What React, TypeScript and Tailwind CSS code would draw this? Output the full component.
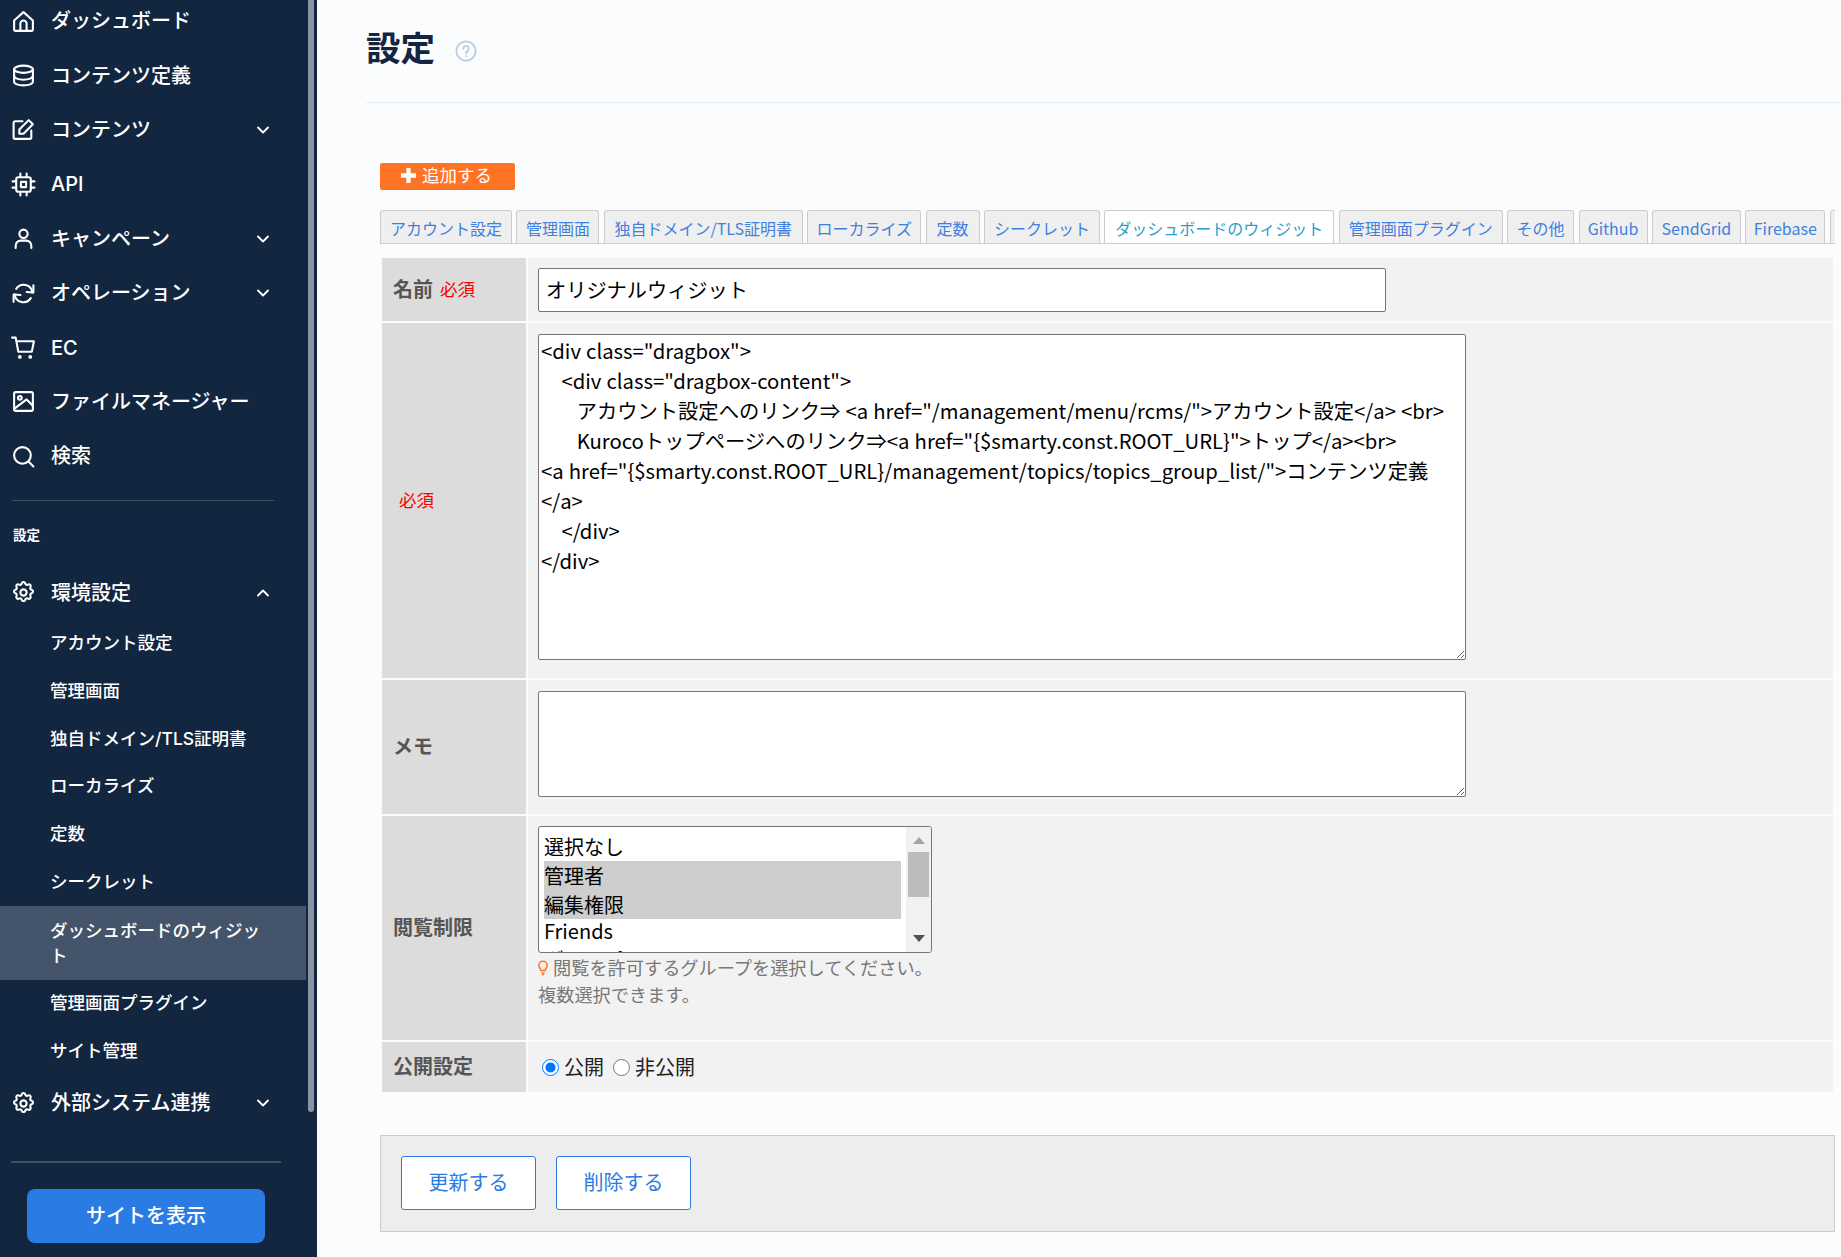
import { ChevronDown, ChevronUp } from 'lucide-react';

const tabs = [
  { label: 'アカウント設定', w: 'w-[132px]' },
  { label: '管理画面', w: 'w-[83px]' },
  { label: '独自ドメイン/TLS証明書', w: 'w-[199px]' },
  { label: 'ローカライズ', w: 'w-[114px]' },
  { label: '定数', w: 'w-[54px]' },
  { label: 'シークレット', w: 'w-[116px]' },
  { label: 'ダッシュボードのウィジット', w: 'w-[230px]' },
  { label: '管理画面プラグイン', w: 'w-[164px]' },
  { label: 'その他', w: 'w-[67px]' },
  { label: 'Github', w: 'w-[69px]' },
  { label: 'SendGrid', w: 'w-[89px]' },
  { label: 'Firebase', w: 'w-[80px]' },
  { label: 'Webhook', w: 'w-[90px]' },
];

const subItems = ['アカウント設定', '管理画面', '独自ドメイン/TLS証明書', 'ローカライズ', '定数', 'シークレット'];

const code = `<div class="dragbox">
    <div class="dragbox-content">
       アカウント設定へのリンク⇒ <a href="/management/menu/rcms/">アカウント設定</a> <br>
       Kurocoトップページへのリンク⇒<a href="{$smarty.const.ROOT_URL}">トップ</a><br>
<a href="{$smarty.const.ROOT_URL}/management/topics/topics_group_list/">コンテンツ定義</a>
    </div>
</div>`;

function Icon({ children }: { children: React.ReactNode }) {
  return (
    <svg viewBox="0 0 24 24" className="h-[25px] w-[25px] shrink-0" fill="none" stroke="currentColor" strokeWidth="2" strokeLinecap="round" strokeLinejoin="round">
      {children}
    </svg>
  );
}

const icons = {
  home: <><path d="M3 11l9-8 9 8v9a1 1 0 0 1-1 1H4a1 1 0 0 1-1-1z" /><path d="M9 21v-7a3 3 0 0 1 6 0v7" /></>,
  db: <><ellipse cx="12" cy="6" rx="9" ry="3.5" /><path d="M3 6v12c0 2 4 3.5 9 3.5s9-1.5 9-3.5V6" /><path d="M3 12.5c0 2 4 3.5 9 3.5s9-1.5 9-3.5" /></>,
  edit: <><path d="M11 4H4a1.5 1.5 0 0 0-1.5 1.5v14A1.5 1.5 0 0 0 4 21h14a1.5 1.5 0 0 0 1.500-1.500V13" /><path d="M17 3l4 4-9 9H8v-4z" /></>,
  cpu: <><rect x="5" y="5" width="14" height="14" rx="2" /><rect x="9.500" y="9.500" width="5" height="5" /><path d="M9 1.500V5M15 1.500V5M9 19v3.500M15 19v3.500M1.500 9H5M1.500 15H5M19 9h3.500M19 15h3.500" /></>,
  user: <><circle cx="12" cy="7.500" r="4" /><path d="M4.500 21v-2a5 5 0 0 1 5-5h5a5 5 0 0 1 5 5v2" /></>,
  refresh: <><path d="M20.500 11A8.500 8.500 0 0 0 5 7.500" /><path d="M21.500 4v7h-.500l-6-.500" /><path d="M3.500 13A8.500 8.500 0 0 0 19 16.500" /><path d="M2.500 20v-7h.500l6 .500" /></>,
  cart: <><path d="M1 2.500h3.500L7 16h13l2-10H5" /><circle cx="8.500" cy="21" r=".8" /><circle cx="18.500" cy="21" r=".8" /></>,
  image: <><rect x="3" y="3" width="18" height="18" rx="1.500" /><circle cx="8.500" cy="8.500" r="1.800" /><path d="M3 19l12-9 6 6" /></>,
  search: <><circle cx="11" cy="11" r="8" /><path d="M17 17l4.500 4.500" /></>,
  gear: <><circle cx="12" cy="12" r="3" /><path d="M10.300 3.300a1.750 1.750 0 0 1 3.400 0 1.750 1.750 0 0 0 2.600 1.100 1.750 1.750 0 0 1 2.400 2.400 1.750 1.750 0 0 0 1.100 2.600 1.750 1.750 0 0 1 0 3.400 1.750 1.750 0 0 0-1.100 2.600 1.750 1.750 0 0 1-2.400 2.400 1.750 1.750 0 0 0-2.600 1.100 1.750 1.750 0 0 1-3.400 0 1.750 1.750 0 0 0-2.600-1.100 1.750 1.750 0 0 1-2.400-2.400 1.750 1.750 0 0 0-1.100-2.600 1.750 1.750 0 0 1 0-3.400 1.750 1.750 0 0 0 1.100-2.600 1.750 1.750 0 0 1 2.400-2.400 1.750 1.750 0 0 0 2.600-1.100z" /></>,
};

function NavRow({ icon, label, open, className = 'h-[54.4px]' }: { icon: React.ReactNode; label: string; open?: 'up' | 'down'; className?: string }) {
  return (
    <div className={`flex items-center pl-[11px] pr-[44px] text-[20px] font-medium text-white ${className}`}>
      <Icon>{icon}</Icon>
      <span className="ml-[15px] flex-1 whitespace-nowrap">{label}</span>
      {open === 'down' && <ChevronDown size={20} strokeWidth={2.2} />}
      {open === 'up' && <ChevronUp size={20} strokeWidth={2.2} />}
    </div>
  );
}

function SubRow({ label }: { label: string }) {
  return <div className="flex h-[47.7px] items-center pl-[50px] text-[17.5px] font-medium text-white">{label}</div>;
}

function Sidebar() {
  return (
    <aside className="relative flex h-full w-[317px] shrink-0 flex-col overflow-hidden bg-[#13263f] font-['Inter','Noto_Sans_CJK_JP',sans-serif]">
      <div className="h-[1161px] shrink-0 overflow-hidden">
        <div className="-mt-[6px]">
          <NavRow icon={icons.home} label="ダッシュボード" />
          <NavRow icon={icons.db} label="コンテンツ定義" />
          <NavRow icon={icons.edit} label="コンテンツ" open="down" />
          <NavRow icon={icons.cpu} label="API" />
          <NavRow icon={icons.user} label="キャンペーン" open="down" />
          <NavRow icon={icons.refresh} label="オペレーション" open="down" />
          <NavRow icon={icons.cart} label="EC" />
          <NavRow icon={icons.image} label="ファイルマネージャー" />
          <NavRow icon={icons.search} label="検索" />
        </div>
        <div className="ml-[12px] mt-[16px] w-[262px] border-t border-[#3f4f66]" />
        <div className="ml-[13px] mt-[26px] text-[13.500px] font-bold leading-[16px] text-white">設定</div>
        <NavRow icon={icons.gear} label="環境設定" open="up" className="mt-[23px] h-[54px]" />
        {subItems.map((s) => <SubRow key={s} label={s} />)}
        <div className="mr-[11px] flex h-[74px] items-center bg-[#44546a] pl-[50px] pr-[40px] text-[17.5px] font-medium leading-[25px] text-white">
          ダッシュボードのウィジット
        </div>
        <SubRow label="管理画面プラグイン" />
        <SubRow label="サイト管理" />
        <NavRow icon={icons.gear} label="外部システム連携" open="down" className="mt-[1px] h-[54.4px]" />
      </div>
      <div className="mx-[11px] w-[270px] border-t-2 border-[#3f4f66] pl-[16px] pt-[26px]">
        <div className="flex h-[54px] w-[238px] items-center justify-center rounded-[8px] bg-[#2b7be4] text-[20px] font-medium text-white">
          サイトを表示
        </div>
      </div>
      <div className="absolute right-[3px] top-0 h-[1112px] w-[6px] rounded-b-[3px] bg-[#8a93a3]" />
    </aside>
  );
}

function Row({ label, h, children }: { label: React.ReactNode; h: string; children: React.ReactNode }) {
  return (
    <div className={`grid grid-cols-[144px_1fr] gap-[2px] ${h}`}>
      <div className="flex items-center bg-[#dcdcdc] pb-[1px] pl-[11px] text-[20px] font-bold text-[#555]">{label}</div>
      <div className="bg-[#f2f2f2] pl-[10px] pt-[10px]">{children}</div>
    </div>
  );
}

function RoleList() {
  const roles = ['選択なし', '管理者', '編集権限', 'Friends', 'グループ'];
  return (
    <div className="flex h-[127px] w-[394px] overflow-hidden rounded-[3px] border border-[#767676] bg-white text-[20px] text-black">
      <div className="w-[367px] shrink-0 pl-[5px] pt-[5px]">
        {roles.map((r, i) => (
          <div key={r} className={`w-[357px] ${i === 3 ? 'h-[26px] leading-[24px]' : 'h-[29px] leading-[29px]'} ${i === 1 || i === 2 ? 'bg-[#cecece]' : ''}`}>{r}</div>
        ))}
      </div>
      <div className="flex w-[25px] shrink-0 flex-col items-center bg-[#f1f1f1] pb-[10px] pt-[10px]">
        <svg viewBox="0 0 12 7" className="h-[7px] w-[12px] fill-[#a3a3a3]"><path d="M6 0l6 7H0z" /></svg>
        <div className="mt-[8px] h-[45px] w-[21px] bg-[#bcbcbc]" />
        <svg viewBox="0 0 12 7" className="mt-auto h-[7px] w-[12px] fill-[#505050]"><path d="M6 7L0 0h12z" /></svg>
      </div>
    </div>
  );
}

function Tabs() {
  return (
    <div className="mt-[20px] flex h-[34px] gap-[4.400px] overflow-hidden whitespace-nowrap border-b border-[#ccc]">
      {tabs.map((t, i) =>
        i === 6 ? (
          <div key={t.label} className={`relative h-[34px] shrink-0 rounded-t-[3px] border border-b-0 border-[#ccc] bg-white text-center text-[16px] leading-[35px] text-[#2a9dd0] ${t.w}`}>{t.label}</div>
        ) : (
          <div key={t.label} className={`h-[33px] shrink-0 rounded-t-[3px] border border-b-0 border-[#ccc] bg-[#efefef] text-center text-[16px] leading-[35px] text-[#3f7fe0] ${t.w}`}>{t.label}</div>
        ),
      )}
    </div>
  );
}

export default function App() {
  return (
    <div className="flex h-[1257px] w-full overflow-hidden bg-[#fbfcfe] font-['Noto_Sans_CJK_JP',sans-serif]">
      <Sidebar />
      <main className="min-w-0 flex-1 pl-[49px]">
        <div className="flex h-[103px] items-center border-b border-[#e8edf3] pb-[10px]">
          <h1 className="text-[34.500px] font-bold leading-none text-[#14263f]">設定</h1>
          <svg viewBox="0 0 24 24" className="ml-[20px] mt-[10px] h-[22px] w-[22px]" fill="none" stroke="#b9cbe3" strokeWidth="2" strokeLinecap="round">
            <circle cx="12" cy="12" r="10.500" />
            <path d="M9 9.500a3 3 0 1 1 4.500 2.600c-1 .6-1.500 1.200-1.500 2.400" />
            <path d="M12 17.500v.1" />
          </svg>
        </div>
        <div className="ml-[14px] mr-[6px]">
          <div className="mt-[60px] flex h-[27px] w-[135px] items-center rounded-[2px] bg-[#ff7324] pb-[2px] pl-[21px] text-[17.500px] text-white">
            <svg viewBox="0 0 14 14" className="h-[15px] w-[15px] fill-white"><path d="M5 0h4v5h5v4H9v5H5V9H0V5h5z" /></svg>
            <span className="ml-[6px]">追加する</span>
          </div>
          <Tabs />
          <div className="ml-[2px] mr-[2px] mt-[14px] flex flex-col gap-[2px]">
            <Row h="h-[63px]" label={<>名前<span className="ml-[7px] text-[17.500px] font-normal text-[#ff0000]">必須</span></>}>
              <input readOnly value="オリジナルウィジット" className="h-[44px] w-[848px] rounded-[2px] border border-[#767676] bg-white px-[7px] pb-[2px] text-[20.200px] text-black" />
            </Row>
            <Row h="h-[355px]" label={<span className="pl-[6px] text-[17.500px] font-normal text-[#ff0000]">必須</span>}>
              <textarea readOnly defaultValue={code} className="mt-[1px] block h-[326px] w-[928px] rounded-[2px] border border-[#767676] bg-white px-[2px] pt-0 text-[20.300px] leading-[30px] text-black [word-spacing:0.55px]" />
            </Row>
            <Row h="h-[134px]" label={<span className="mb-[2px]">メモ</span>}>
              <textarea readOnly className="mt-[1px] block h-[106px] w-[928px] rounded-[2px] border border-[#767676] bg-white" />
            </Row>
            <Row h="h-[224px]" label={<span className="mb-[2px]">閲覧制限</span>}>
              <RoleList />
              <div className="text-[18.200px] leading-[27px] text-[#777]">
                <div className="mt-[1px] flex items-center">
                  <svg viewBox="0 0 12 18" className="mr-[5px] h-[16px] w-[10px]" fill="none" stroke="#ff7324" strokeWidth="1.800">
                    <path d="M6 1a5 5 0 0 1 5 5c0 2.500-2.500 4-2.500 6h-5C3.500 10 1 8.500 1 6a5 5 0 0 1 5-5z" />
                    <path d="M4 15h4M5 17h2" />
                  </svg>
                  閲覧を許可するグループを選択してください。
                </div>
                <div>複数選択できます。</div>
              </div>
            </Row>
            <div className="grid h-[50px] grid-cols-[144px_1fr] gap-[2px]">
              <div className="flex items-center bg-[#dcdcdc] pb-[2px] pl-[11px] text-[20px] font-bold text-[#555]">公開設定</div>
              <div className="flex items-center bg-[#f2f2f2] pl-[14px] text-[20px] text-[#222]">
                <input type="radio" name="pub" defaultChecked className="m-0 h-[17px] w-[17px]" />
                <span className="ml-[5px]">公開</span>
                <input type="radio" name="pub" className="ml-[9px] h-[17px] w-[17px]" />
                <span className="ml-[5px]">非公開</span>
              </div>
            </div>
          </div>
          <div className="mt-[43px] flex h-[97px] gap-[20px] border border-[#ccc] bg-[#ededed] pl-[20px] pt-[20px]">
            <div className="flex h-[54px] w-[135px] items-center justify-center rounded-[3px] border border-[#2b7be4] bg-white pb-[2px] text-[20px] text-[#2b7be4]">更新する</div>
            <div className="flex h-[54px] w-[135px] items-center justify-center rounded-[3px] border border-[#2b7be4] bg-white pb-[2px] text-[20px] text-[#2b7be4]">削除する</div>
          </div>
        </div>
      </main>
    </div>
  );
}
